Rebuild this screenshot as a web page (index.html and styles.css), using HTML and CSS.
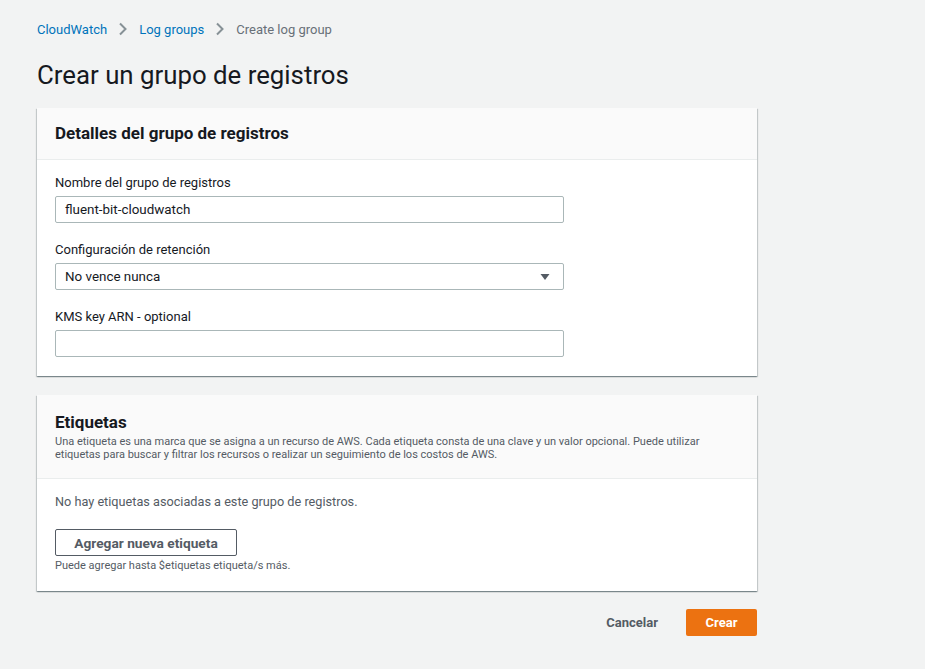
FILE: index.html
```html
<!DOCTYPE html>
<html lang="es">
<head>
<meta charset="utf-8">
<title>Crear un grupo de registros</title>
<link rel="stylesheet" href="styles.css">
</head>
<body>
<div class="page">
  <nav class="crumbs">
    <a class="crumb-link" href="#">CloudWatch</a>
    <svg class="chev" width="16" height="16" viewBox="0 0 16 16"><path d="M5 2.5 L10.5 8 L5 13.5" fill="none" stroke="#879196" stroke-width="2"/></svg>
    <a class="crumb-link" href="#">Log groups</a>
    <svg class="chev" width="16" height="16" viewBox="0 0 16 16"><path d="M5 2.5 L10.5 8 L5 13.5" fill="none" stroke="#879196" stroke-width="2"/></svg>
    <span class="crumb-current">Create log group</span>
  </nav>
  <h1 class="title">Crear un grupo de registros</h1>

  <section class="card">
    <div class="card-head">
      <h2 class="card-title">Detalles del grupo de registros</h2>
    </div>
    <div class="card-body">
      <div class="field">
        <label class="label">Nombre del grupo de registros</label>
        <div class="input">fluent-bit-cloudwatch</div>
      </div>
      <div class="field">
        <label class="label">Configuración de retención</label>
        <div class="input select">
          <span>No vence nunca</span>
          <svg width="12" height="12" viewBox="0 0 12 12"><path d="M1.5 3 L10.5 3 L6 9 Z" fill="#545b64"/></svg>
        </div>
      </div>
      <div class="field">
        <label class="label">KMS key ARN - optional</label>
        <div class="input"></div>
      </div>
    </div>
  </section>

  <section class="card">
    <div class="card-head tall">
      <h2 class="card-title">Etiquetas</h2>
      <p class="card-desc">Una etiqueta es una marca que se asigna a un recurso de AWS. Cada etiqueta consta de una clave y un valor opcional. Puede utilizar etiquetas para buscar y filtrar los recursos o realizar un seguimiento de los costos de AWS.</p>
    </div>
    <div class="card-body tags">
      <p class="empty">No hay etiquetas asociadas a este grupo de registros.</p>
      <button class="btn-outline">Agregar nueva etiqueta</button>
      <p class="hint">Puede agregar hasta $etiquetas etiqueta/s más.</p>
    </div>
  </section>

  <div class="actions">
    <button class="btn-link">Cancelar</button>
    <button class="btn-primary">Crear</button>
  </div>
</div>
</body>
</html>
```

FILE: styles.css
```css
html, body {
  margin: 0;
  padding: 0;
  background: #f2f3f3;
}
body {
  font-family: Roboto, "Liberation Sans", sans-serif;
  color: #16191f;
  font-size: 14px;
}
.page {
  width: 720px;
  padding: 18px 0 0 37px;
}
.crumbs {
  display: flex;
  align-items: center;
  height: 22px;
  font-size: 13px;
  gap: 8px;
}
.crumb-link {
  color: #0073bb;
  text-decoration: none;
}
.crumb-current {
  color: #687078;
}
.chev {
  display: block;
}
.title {
  margin: 0;
  padding: 16px 0 0;
  font-size: 25.8px;
  font-weight: 400;
  line-height: 38px;
  color: #16191f;
}
.card {
  background: #fff;
  margin-top: 14px;
  box-shadow: 0 1px 1px 0 rgba(0, 28, 36, 0.3), 1px 1px 1px 0 rgba(0, 28, 36, 0.15), -1px 1px 1px 0 rgba(0, 28, 36, 0.15);
}
.card + .card {
  margin-top: 19px;
}
.card-head {
  background: #fafafa;
  border-bottom: 1px solid #eaeded;
  padding: 13px 18px 0;
  height: 38px;
}
.card-head.tall {
  height: auto;
  padding: 15px 18px 17px;
}
.card-title {
  margin: 0;
  font-size: 17px;
  font-weight: 700;
  line-height: 24px;
}
.card-desc {
  margin: 1px 0 0;
  font-size: 11px;
  line-height: 13px;
  color: #545b64;
  width: 670px;
}
.card-body {
  padding: 13px 18px 19px;
}
.field + .field {
  margin-top: 17px;
}
.label {
  display: block;
  font-size: 13px;
  line-height: 20px;
  margin-bottom: 3px;
}
.input {
  box-sizing: border-box;
  width: 509px;
  height: 27px;
  border: 1px solid #aab7b8;
  border-radius: 2px;
  padding: 0 9px;
  display: flex;
  align-items: center;
  font-size: 13.4px;
  color: #16191f;
  background: #fff;
}
.select {
  justify-content: space-between;
  padding-right: 12px;
}
.card-body.tags {
  padding: 13px 18px 18px;
}
.empty {
  margin: 0;
  font-size: 12.7px;
  line-height: 20px;
  color: #545b64;
}
.btn-outline {
  margin-top: 17px;
  display: block;
  box-sizing: border-box;
  height: 27px;
  width: 182px;
  background: #fff;
  border: 1px solid #545b64;
  border-radius: 2px;
  font-family: inherit;
  font-size: 13.7px;
  font-weight: 700;
  color: #545b64;
  padding: 0;
}
.hint {
  margin: 3px 0 0;
  font-size: 11px;
  line-height: 14px;
  color: #545b64;
}
.actions {
  display: flex;
  justify-content: flex-end;
  align-items: center;
  margin-top: 18px;
  gap: 8px;
}
.btn-link, .btn-primary {
  font-family: inherit;
  font-size: 13px;
  font-weight: 700;
  border: none;
  height: 27px;
  border-radius: 2px;
  padding: 0 20px;
}
.btn-link {
  background: transparent;
  color: #545b64;
}
.btn-primary {
  background: #ec7211;
  color: #fff;
  width: 71px;
  padding: 0;
}
```
